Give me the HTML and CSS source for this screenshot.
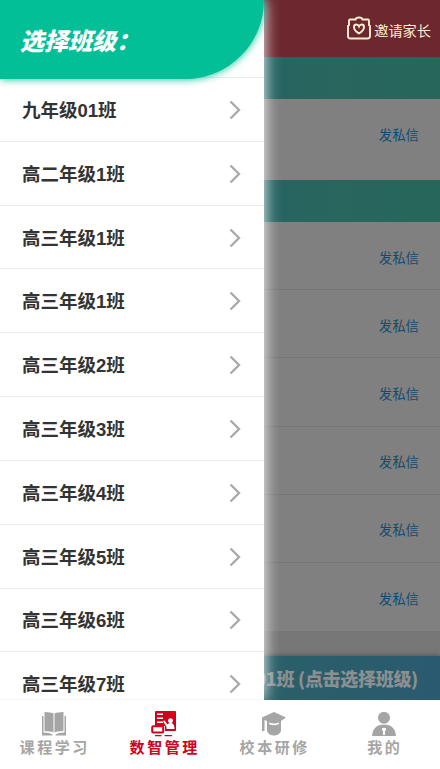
FILE: index.html
```html
<!DOCTYPE html>
<html lang="zh-CN">
<head>
    <meta charset="UTF-8">
    <meta name="viewport" content="width=device-width, initial-scale=1.0">
    <title>数智管理</title>
    <link rel="stylesheet" href="styles.css">
</head>
<body>
    <div class="page">
        <div class="top-bar">
            <svg class="invite-icon" viewBox="0 0 26 26">
                <path d="M4 4.500h5.500q.5-2 3.500-2t3.500 2H22q1 0 1 1.500v4l1 1v10q0 2.500-2.500 2.500h-17Q2 23.500 2 21V11l1-1V6q0-1.500 1-1.500z"/>
                <path class="heart" d="M13 18.500q-5-3-5-6.500 0-2.500 2.300-2.500 1.900 0 2.700 2 .8-2 2.700-2 2.300 0 2.300 2.500 0 3.500-5 6.500z"/>
            </svg>
            <span>邀请家长</span>
        </div>
        <div class="group-bar"></div>
        <div class="member member-first"><a>发私信</a></div>
        <div class="group-bar"></div>
        <div class="member"><a>发私信</a></div>
        <div class="member"><a>发私信</a></div>
        <div class="member"><a>发私信</a></div>
        <div class="member"><a>发私信</a></div>
        <div class="member"><a>发私信</a></div>
        <div class="member member-last"><a>发私信</a></div>
        <div class="class-button">九年级01班 (点击选择班级)</div>
    </div>

    <div class="drawer">
        <div class="drawer-title">选择班级<span class="colon">：</span></div>
        <ul class="class-list">
            <li>九年级01班<svg viewBox="0 0 12 20"><path d="M1.500 1.500L10 10l-8.500 8.500"/></svg></li>
            <li>高二年级1班<svg viewBox="0 0 12 20"><path d="M1.500 1.500L10 10l-8.500 8.500"/></svg></li>
            <li>高三年级1班<svg viewBox="0 0 12 20"><path d="M1.500 1.500L10 10l-8.500 8.500"/></svg></li>
            <li>高三年级1班<svg viewBox="0 0 12 20"><path d="M1.500 1.500L10 10l-8.500 8.500"/></svg></li>
            <li>高三年级2班<svg viewBox="0 0 12 20"><path d="M1.500 1.500L10 10l-8.500 8.500"/></svg></li>
            <li>高三年级3班<svg viewBox="0 0 12 20"><path d="M1.500 1.500L10 10l-8.500 8.500"/></svg></li>
            <li>高三年级4班<svg viewBox="0 0 12 20"><path d="M1.500 1.500L10 10l-8.500 8.500"/></svg></li>
            <li>高三年级5班<svg viewBox="0 0 12 20"><path d="M1.500 1.500L10 10l-8.500 8.500"/></svg></li>
            <li>高三年级6班<svg viewBox="0 0 12 20"><path d="M1.500 1.500L10 10l-8.500 8.500"/></svg></li>
            <li>高三年级7班<svg viewBox="0 0 12 20"><path d="M1.500 1.500L10 10l-8.500 8.500"/></svg></li>
        </ul>
    </div>

    <div class="tab-bar">
        <div class="tab">
            <svg viewBox="0 0 26 26">
                <path d="M3.500 1q6 0 9 1.500v19q-3-1.500-9-1.500zM22.500 1q-6 0-9 1.500v19q3-1.500 9-1.500z"/>
                <path d="M1 5h1.500v16.500q6 0 9 2v1H1zM25 5h-1.500v16.500q-6 0-9 2v1H25z"/>
            </svg>
            <span>课程学习</span>
        </div>
        <div class="tab active">
            <svg viewBox="0 0 26 26">
                <path d="M5 0h19q1 0 1 1v18q0 1-1 1H14v-5H4V1q0-1 1-1z"/>
                <path class="cut" d="M6 2.500h6V4H6zM6 6.500h6V8H6zM6 10.500h6V12H6zM12 10l1.500-.5 3 4q1-1.500 2-1.500a2.500 2.500 0 1 1 2 0q3 1 3 6h-8v-2z"/>
                <rect class="box" x="1.200" y="15.200" width="11" height="6.300" rx="1"/>
                <path d="M4 24h6.500v1.300H4zM13.500 24H21v1.300h-7.500z"/>
            </svg>
            <span>数智管理</span>
        </div>
        <div class="tab">
            <svg viewBox="0 0 26 26">
                <path d="M1 6.500L13 1l12 5.500-5 3.500v10q-2 4.500-7 4.500T6 20V10l-2.500-1v11H1z"/>
                <path class="cut" d="M8 11.500q5 2 10 0V13q-5 2.500-10 0z"/>
            </svg>
            <span>校本研修</span>
        </div>
        <div class="tab">
            <svg viewBox="0 0 26 26">
                <circle cx="13" cy="6.800" r="6"/>
                <path d="M1 25q1-11.500 12-11.500T25 25z"/>
                <path class="cut" d="M11 17h4v2l-1 1v4h-2v-4l-1-1z"/>
            </svg>
            <span>我的</span>
        </div>
    </div>
</body>
</html>
```
FILE: styles.css
```css
* {
    margin: 0;
    padding: 0;
    box-sizing: border-box;
}

body {
    height: 769px;
    overflow: hidden;
    position: relative;
    background: #777;
    font-family: "Liberation Sans", "Noto Sans CJK SC", sans-serif;
}

.page {
    height: 700px;
    display: flex;
    flex-direction: column;
}

.top-bar {
    height: 57px;
    background: #6c272f;
    color: #ffeed0;
    display: flex;
    align-items: center;
    justify-content: flex-end;
    gap: 2px;
    padding-right: 9px;
    font-size: 14.200px;
}

.top-bar span {
    padding-top: 3px;
}

.invite-icon {
    width: 26px;
    height: 26px;
    margin-top: -2px;
    fill: none;
    stroke: #ffeed0;
    stroke-width: 1.9;
}

.group-bar {
    height: 42px;
    background: linear-gradient(90deg, #2a6478 50%, #286560 65%, #27675a);
}

.member {
    height: 68.200px;
    padding-top: 2px;
    background: #808080;
    border-bottom: 1px solid #767676;
    display: flex;
    align-items: center;
    justify-content: flex-end;
    padding-right: 21px;
    font-size: 13.400px;
    color: #144b70;
}

.member-first {
    height: 81px;
    border: none;
    padding-top: 0;
    padding-bottom: 12px;
}

.member-last {
    border: none;
    padding-top: 1px;
}

.class-button {
    height: 44px;
    margin-top: auto;
    padding-right: 22px;
    background: linear-gradient(90deg, #27665c, #2a6068 60%, #2a5a70);
    box-shadow: 0 0 5px rgba(0, 0, 0, 0.4);
    color: #8c8f90;
    font-family: "Noto Sans CJK SC", sans-serif;
    font-size: 18px;
    font-weight: 900;
    letter-spacing: -0.300px;
    line-height: 44px;
    text-align: right;
}

.drawer {
    position: absolute;
    top: 0;
    left: 0;
    width: 60%;
    height: 700px;
    background: #fff;
    border-bottom: 1px solid #f3f3f3;
    box-shadow: 0 0 15px #fff;
    clip-path: inset(0 -30px 0 0);
}

.drawer-title {
    position: relative;
    height: 79px;
    padding: 5px 0 0 20px;
    background: #02bf98;
    border-bottom-right-radius: 79px;
    box-shadow: 0 0 8px #02bf98;
    color: #fff;
    font-size: 24px;
    font-weight: 900;
    font-style: italic;
    line-height: 74px;
}

.drawer-title .colon {
    margin-left: 0;
}

.class-list {
    list-style: none;
    margin-top: -2.050px;
}

.class-list li {
    height: 63.830px;
    border-top: 1px solid #eaeaea;
    display: flex;
    align-items: center;
    justify-content: space-between;
    padding: 0 23px 1px 22px;
    color: #333;
    font-size: 18.500px;
    font-weight: bold;
}

.class-list svg {
    width: 12px;
    height: 20px;
    margin-top: 2px;
    fill: none;
    stroke: #aaa;
    stroke-width: 2.4;
}

.tab-bar {
    position: absolute;
    left: 0;
    bottom: 0;
    width: 100%;
    height: 69px;
    background: #fff;
    display: flex;
}

.tab {
    flex: 1;
    display: flex;
    flex-direction: column;
    align-items: center;
    padding: 11px 2px 0 0;
    color: #a5a5a5;
    font-size: 15px;
    font-weight: bold;
    line-height: 20px;
    letter-spacing: 2.600px;
    font-family: "Noto Sans CJK SC", sans-serif;
}

.tab span {
    margin-right: -1.500px;
}

.tab svg {
    width: 26px;
    height: 26px;
    fill: currentColor;
}

.tab .cut {
    fill: #fff;
}

.tab .box {
    fill: #fff;
    stroke: currentColor;
    stroke-width: 2;
}

.tab.active {
    color: #d0021b;
}
```
